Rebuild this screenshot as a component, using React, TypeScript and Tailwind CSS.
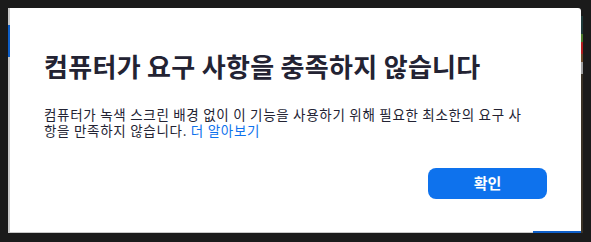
export default function App() {
  return (
    <div
      className="w-[591px] h-[242px] bg-[#1b1b1b] pt-2 pl-2 flex"
      style={{ fontFamily: '"Noto Sans CJK KR", "Noto Sans", sans-serif' }}
    >
      <div className="relative w-[573px] h-[225px] bg-white border-l-2 border-b border-[#c9c9c9] rounded-tr-[3px] px-[34px] pt-[42px] flex flex-col">
        <div className="absolute -left-[2px] top-[17px] w-[2px] h-[32px] bg-[#0e5fc9]" />
        <div className="absolute right-0 -bottom-[1px] w-[48px] h-[2px] bg-[#0e5fc9]" />
        <h1 className="text-[26px] leading-[32px] font-bold text-[#232333] tracking-[0.3px]">
          컴퓨터가 요구 사항을 충족하지 않습니다
        </h1>
        <p className="mt-[24px] w-[478px] text-[13.5px] leading-[16px] text-[#232333] tracking-[0.7px]">
          컴퓨터가 녹색 스크린 배경 없이 이 기능을 사용하기 위해 필요한 최소한의 요구 사항을 만족하지 않습니다.{' '}
          <a className="text-[#0e72ed]">더 알아보기</a>
        </p>
        <div className="mt-auto mb-[33px] flex justify-end">
          <button className="w-[119px] h-[31px] rounded-[8px] bg-[#0e72ed] text-white text-[15px] font-bold">
            확인
          </button>
        </div>
      </div>
      <div className="w-[2px] h-[225px] flex flex-col">
        <div className="h-[8px] bg-[#1b1b1b]" />
        <div className="h-[18px] bg-[#1f3a3a]" />
        <div className="h-[8px] bg-[#4a7a2a]" />
        <div className="h-[12px] bg-[#b01e1e]" />
        <div className="h-[8px] bg-[#6b4a2a]" />
        <div className="h-[12px] bg-[#a0a0a0]" />
        <div className="flex-1 bg-[#3a3226]" />
      </div>
    </div>
  );
}
